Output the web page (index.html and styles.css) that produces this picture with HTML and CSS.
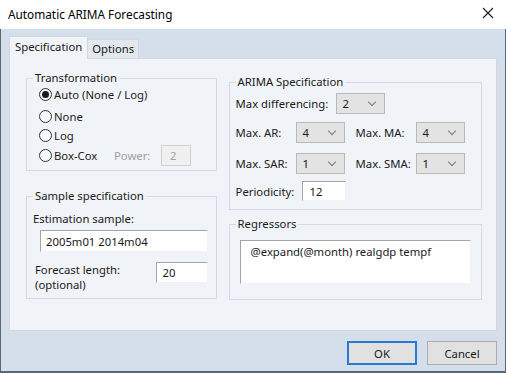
FILE: index.html
```html
<!DOCTYPE html>
<html lang="en">
<head>
    <meta charset="UTF-8">
    <title>Automatic ARIMA Forecasting</title>
    <link rel="stylesheet" href="styles.css">
</head>
<body>
    <div class="window">
        <div class="titlebar">
            <span class="title">Automatic ARIMA Forecasting</span>
            <svg class="close" width="12" height="12" viewBox="0 0 12 12">
                <path d="M1 1 L11 11 M11 1 L1 11" stroke="#1a1a1a" stroke-width="1.1" fill="none"/>
            </svg>
        </div>

        <div class="client">
            <div class="tabs">
                <div class="tab active">Specification</div>
                <div class="tab">Options</div>
            </div>

            <div class="panel">
                <div class="col col-left">
                    <fieldset class="group transform">
                        <legend>Transformation</legend>
                        <div class="group-body">
                            <div class="radio-row row-auto">
                                <span class="radio checked"></span>
                                <span class="radio-label">Auto (None / Log)</span>
                            </div>
                            <div class="radio-row row-none">
                                <span class="radio"></span>
                                <span class="radio-label">None</span>
                            </div>
                            <div class="radio-row row-log">
                                <span class="radio"></span>
                                <span class="radio-label">Log</span>
                            </div>
                            <div class="radio-row row-boxcox">
                                <span class="radio"></span>
                                <span class="radio-label boxcox-label">Box-Cox</span>
                                <span class="power-label">Power:</span>
                                <span class="field field-disabled power-field">2</span>
                            </div>
                        </div>
                    </fieldset>

                    <fieldset class="group sample">
                        <legend>Sample specification</legend>
                        <div class="group-body">
                            <div class="est-label">Estimation sample:</div>
                            <div class="field est-field">2005m01 2014m04</div>
                            <div class="forecast-row">
                                <div class="forecast-label">
                                    <div>Forecast length:</div>
                                    <div>(optional)</div>
                                </div>
                                <div class="field forecast-field">20</div>
                            </div>
                        </div>
                    </fieldset>
                </div>

                <div class="col col-right">
                    <fieldset class="group arima">
                        <legend>ARIMA Specification</legend>
                        <div class="group-body">
                            <div class="arima-row row-diff">
                                <span class="lbl lbl-diff">Max differencing:</span>
                                <span class="combo"><span class="combo-value">2</span><span class="chev"></span></span>
                            </div>
                            <div class="arima-row row-ar">
                                <span class="lbl lbl-short">Max. AR:</span>
                                <span class="combo"><span class="combo-value">4</span><span class="chev"></span></span>
                                <span class="lbl lbl-second">Max. MA:</span>
                                <span class="combo"><span class="combo-value">4</span><span class="chev"></span></span>
                            </div>
                            <div class="arima-row row-sar">
                                <span class="lbl lbl-short">Max. SAR:</span>
                                <span class="combo"><span class="combo-value">1</span><span class="chev"></span></span>
                                <span class="lbl lbl-second">Max. SMA:</span>
                                <span class="combo"><span class="combo-value">1</span><span class="chev"></span></span>
                            </div>
                            <div class="arima-row row-period">
                                <span class="lbl lbl-period">Periodicity:</span>
                                <span class="field period-field">12</span>
                            </div>
                        </div>
                    </fieldset>

                    <fieldset class="group regressors">
                        <legend>Regressors</legend>
                        <div class="group-body">
                            <div class="field reg-field">@expand(@month) realgdp tempf</div>
                        </div>
                    </fieldset>
                </div>
            </div>

            <div class="buttons">
                <div class="btn btn-default">OK</div>
                <div class="btn">Cancel</div>
            </div>
        </div>
    </div>
</body>
</html>
```

FILE: styles.css
```css
* {
    margin: 0;
    padding: 0;
    box-sizing: border-box;
}

body {
    background-color: #d5dfec;
    font-family: 'Noto Sans', 'Open Sans', sans-serif;
    font-size: 11.3px;
    color: #1a1a1a;
}

.window {
    width: 506px;
    height: 373px;
    display: flex;
    flex-direction: column;
    background-color: #d5dfec;
    border-bottom: 2px solid #5b6677;
}

.titlebar {
    height: 29px;
    flex: none;
    background: white;
    display: flex;
    align-items: center;
    justify-content: space-between;
    padding: 0 12px 1px 8px;
}

.title {
    color: #000;
    font-size: 11.8px;
}

.close {
    margin-top: -2px;
}

.client {
    flex: 1;
    display: flex;
    flex-direction: column;
    padding: 6px 8px 0 8px;
    border-left: 1px solid #5b6677;
    border-right: 1px solid #5b6677;
}

/* tabs */
.tabs {
    display: flex;
    align-items: flex-end;
    height: 23px;
    position: relative;
    z-index: 1;
}

.tab {
    height: 19px;
    padding: 0 4px;
    line-height: 18px;
    background: #e3e8ef;
    border: 1px solid #d3d8de;
    border-bottom: none;
    border-left: none;
}

.tab.active {
    height: 23px;
    padding: 1px 5px 0 5px;
    background: #f0f3f8;
    border-left: 1px solid #d3d8de;
    margin-bottom: -1px;
}

.panel {
    height: 273px;
    background: #f0f3f8;
    border: 1px solid #d3d8de;
    display: flex;
    gap: 12px;
    padding: 12px 14px 0 16px;
}

.col {
    display: flex;
    flex-direction: column;
}

.col-left {
    width: 191px;
    gap: 18px;
}

.col-right {
    width: 254px;
    padding-top: 4px;
    gap: 7px;
}

/* group boxes */
.group {
    border: 1px solid #d6dae1;
    border-radius: 0;
}

.group legend {
    margin-left: 6px;
    padding: 0 2px;
    line-height: 14px;
    color: #1a1a1a;
}

/* transformation */
.transform .group-body {
    padding: 0 0 4px 12px;
}

.radio-row {
    display: flex;
    align-items: center;
}

.row-auto {
    height: 18px;
}

.row-none {
    height: 18px;
    margin-top: 4px;
}

.row-log {
    height: 18px;
    margin-top: 1px;
}

.row-boxcox {
    height: 22px;
}

.radio {
    width: 13px;
    height: 13px;
    border: 1px solid #333;
    border-radius: 50%;
    background: #f7f8fa;
    display: flex;
    align-items: center;
    justify-content: center;
    margin-right: 2px;
}

.radio.checked::after {
    content: '';
    width: 7px;
    height: 7px;
    border-radius: 50%;
    background: #1a1a1a;
}

.boxcox-label {
    width: 60px;
}

.power-label {
    width: 47px;
    color: #a0a0a0;
}

.field {
    background: white;
    border: 1px solid;
    border-color: #a4a4a4 #f2f2f2 #f2f2f2 #a4a4a4;
    color: #1a1a1a;
    display: flex;
    align-items: center;
}

.field-disabled {
    background: #f0f0f0;
    border: 1px solid #d0d0d0;
    color: #a0a0a0;
}

.power-field {
    width: 30px;
    height: 21px;
    padding-left: 8px;
}

/* sample specification */
.sample .group-body {
    padding: 8px 0 6px 6px;
}

.est-label {
    line-height: 16px;
}

.est-field {
    width: 168px;
    height: 22px;
    margin: 3px 0 0 7px;
    padding-left: 5px;
}

.forecast-row {
    display: flex;
    justify-content: space-between;
    margin-top: 10px;
    height: 30px;
    padding-right: 8px;
}

.forecast-label {
    line-height: 15px;
    margin-left: 2px;
}

.forecast-field {
    width: 52px;
    height: 21px;
    padding-left: 6px;
}

/* arima specification */
.arima .group-body {
    padding: 4px 0 8px 6px;
}

.arima-row {
    display: flex;
    align-items: center;
    height: 21px;
}

.row-ar {
    margin-top: 8px;
}

.row-sar {
    margin-top: 10px;
}

.row-period {
    margin-top: 7px;
    height: 20px;
}

.lbl-diff {
    width: 100px;
}

.lbl-short {
    width: 60px;
}

.lbl-second {
    width: 60px;
    margin-left: 11px;
}

.lbl-period {
    width: 66px;
}

.combo {
    width: 49px;
    height: 21px;
    background: #e3e3e3;
    border: 1px solid #b9b9b9;
    display: flex;
    align-items: center;
    justify-content: space-between;
    padding: 0 9px 0 6px;
}

.chev {
    width: 6px;
    height: 6px;
    border-right: 1px solid #7a7a7a;
    border-bottom: 1px solid #7a7a7a;
    transform: rotate(45deg);
    margin-top: -4px;
}

.period-field {
    width: 44px;
    height: 20px;
    padding-left: 7px;
}

/* regressors */
.regressors .group-body {
    padding: 9px 0 15px 10px;
}

.reg-field {
    width: 231px;
    height: 44px;
    align-items: flex-start;
    padding: 3px 0 0 10px;
}

/* buttons */
.buttons {
    display: flex;
    justify-content: flex-end;
    gap: 10px;
    margin-top: 10px;
}

.btn {
    width: 70px;
    height: 24px;
    background: #e1e1e1;
    border: 1px solid #adadad;
    display: flex;
    align-items: center;
    justify-content: center;
}

.btn-default {
    border: 2px solid #2a7bd3;
}
```
